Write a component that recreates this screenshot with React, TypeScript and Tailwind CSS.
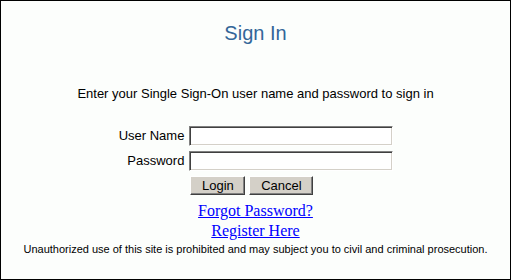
export default function App() {
  return (
    <div className="w-[511px] h-[280px] border border-black bg-[#fcfefc] flex flex-col items-center font-['Liberation_Sans',Arial,sans-serif] text-black">
      <h1 className="mt-[20px] text-[20px] leading-[24px] text-[#336699]">Sign In</h1>

      <p className="mt-[41px] text-[13px] leading-[16px]">
        Enter your Single Sign-On user name and password to sign in
      </p>

      <form className="mt-[24px] ml-[1px] grid grid-cols-[auto_204px] gap-x-[5px] gap-y-[5px] items-center text-[13px] leading-[16px]">
        <label className="text-right">User Name</label>
        <input
          type="text"
          className="h-[20px] bg-white border border-t-[#808080] border-l-[#808080] border-b-white border-r-white shadow-[inset_1px_1px_#404040,inset_-1px_-1px_#d4d0c8] outline-none"
        />
        <label className="text-right">Password</label>
        <input
          type="password"
          className="h-[20px] bg-white border border-t-[#808080] border-l-[#808080] border-b-white border-r-white shadow-[inset_1px_1px_#404040,inset_-1px_-1px_#d4d0c8] outline-none"
        />
        <div />
        <div className="flex gap-[4px] pl-[1px]">
          <button
            type="button"
            className="w-[55px] h-[19px] bg-[#d4d0c8] border border-t-white border-l-white border-r-[#404040] border-b-[#404040] shadow-[inset_-1px_-1px_#808080] text-[13px] leading-[15px]"
          >
            Login
          </button>
          <button
            type="button"
            className="w-[64px] h-[19px] bg-[#d4d0c8] border border-t-white border-l-white border-r-[#404040] border-b-[#404040] shadow-[inset_-1px_-1px_#808080] text-[13px] leading-[15px]"
          >
            Cancel
          </button>
        </div>
      </form>

      <div className="mt-[6px] flex flex-col items-center font-['Liberation_Serif','Times_New_Roman',serif] text-[16px] leading-[20px]">
        <a href="#" className="text-[#0000ff] underline">Forgot Password?</a>
        <a href="#" className="text-[#0000ff] underline">Register Here</a>
      </div>

      <p className="mt-[1px] text-[11px] leading-[14px]">
        Unauthorized use of this site is prohibited and may subject you to civil and criminal prosecution.
      </p>
    </div>
  );
}
